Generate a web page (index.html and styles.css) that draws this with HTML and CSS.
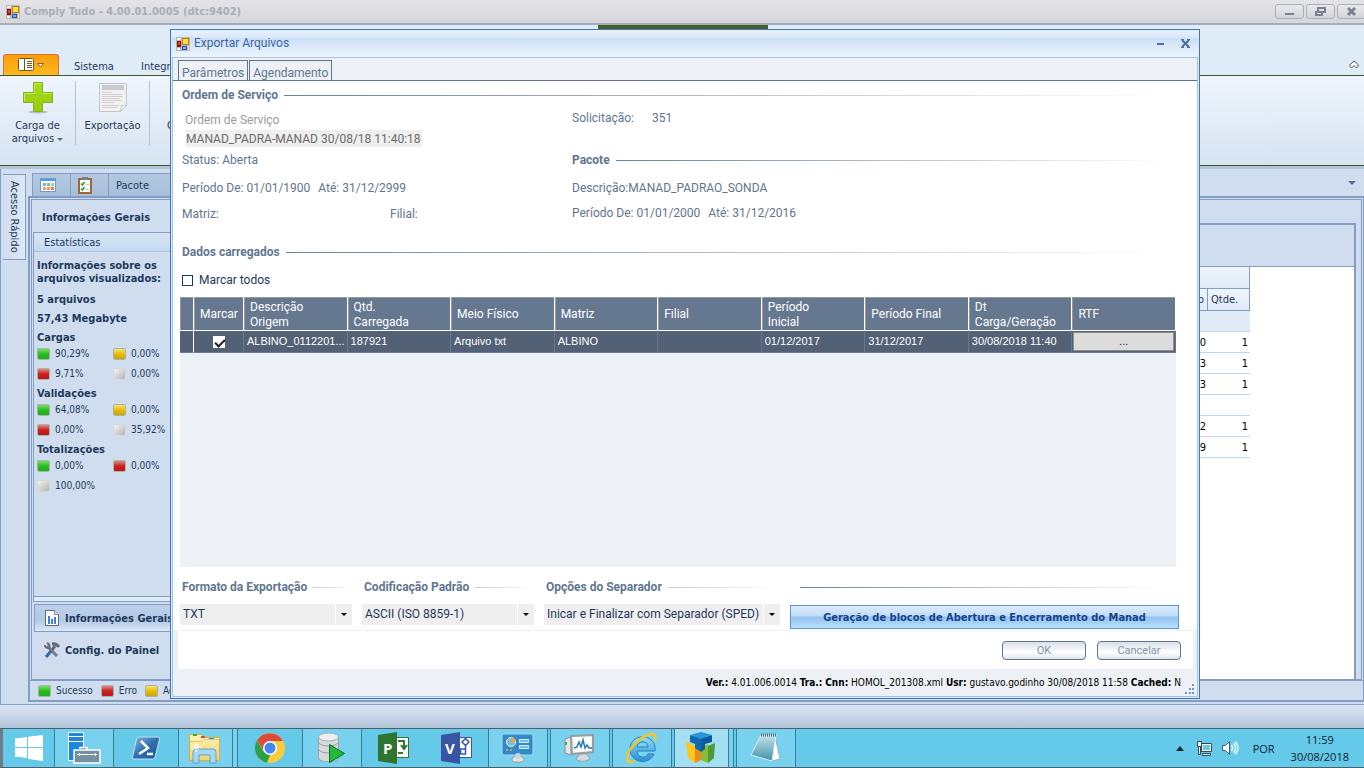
FILE: index.html
```html
<!DOCTYPE html>
<html lang="pt-BR">
<head>
<meta charset="UTF-8" />
<title>Comply Tudo - 4.00.01.0005 (dtc:9402)</title>
<meta name="viewport" content="width=device-width, initial-scale=1" />
<link rel="stylesheet" href="styles.css">
</head>
<body>

<svg width="0" height="0" class="defs">
  <defs>
    <linearGradient id="plusGrad" x1="0" y1="0" x2="0" y2="1"><stop offset="0" stop-color="#a6dc1c"/><stop offset="1" stop-color="#93cc0c"/></linearGradient>
    <linearGradient id="psGrad" x1="0" y1="0" x2="1" y2="1"><stop offset="0" stop-color="#8fb9dc"/><stop offset=".5" stop-color="#2f6fae"/><stop offset="1" stop-color="#1c4f90"/></linearGradient>
    <linearGradient id="folderGrad" x1="0" y1="0" x2="0" y2="1"><stop offset="0" stop-color="#fdf3b8"/><stop offset="1" stop-color="#f3d36c"/></linearGradient>
    <linearGradient id="noteGrad" x1="0" y1="0" x2="0" y2="1"><stop offset="0" stop-color="#c5e3ea"/><stop offset="1" stop-color="#3f93ab"/></linearGradient>
    <linearGradient id="ieGrad" x1="0" y1="0" x2="0" y2="1"><stop offset="0" stop-color="#8fdcf8"/><stop offset="1" stop-color="#2a8fd4"/></linearGradient>
    <symbol id="winforms" viewBox="0 0 14 14">
      <path fill="#b9b9b4" d="M0 0h14v14H0z"/><path fill="#f0f0ec" d="M1 1h4v2H1zM1 11h3v2H1zM12 9h1v4h-1z"/>
      <path fill="#8f1208" d="M1 4h4v6H1z"/><path fill="#e0402a" d="M2 5h2v3H2z"/>
      <path fill="#b48608" d="M6 1h7v7H6z"/><path fill="#ffd84a" d="M7 2h5v5H7z"/>
      <path fill="#2a55c0" d="M6 9h5v4H6z"/><path fill="#7aa6f4" d="M7 10h3v2H7z"/>
    </symbol>
  </defs>
</svg>

<div class="app">
  <header class="titlebar">
    <svg class="ico14" viewBox="0 0 14 14"><use href="#winforms"/></svg>
    <h1>Comply Tudo - 4.00.01.0005 (dtc:9402)</h1>
    <div class="win-buttons">
      <button aria-label="Minimizar"><svg width="27" height="13" viewBox="0 0 27 13"><path fill="#7d8090" d="M9 8h9v2H9z"/></svg></button>
      <button aria-label="Restaurar"><svg width="27" height="13" viewBox="0 0 27 13"><path fill="none" stroke="#7d8090" stroke-width="2" d="M11 6V3h7v4h-3M9 7h6v3H9z"/></svg></button>
      <button aria-label="Fechar"><svg width="27" height="13" viewBox="0 0 27 13"><path fill="none" stroke="#7d8090" stroke-width="3" d="M10 3l7 7M17 3l-7 7"/></svg></button>
    </div>
  </header>

  <nav class="ribbon-tabs">
    <button class="app-menu" aria-label="Menu">
      <svg width="26" height="14" viewBox="0 0 26 14"><rect x=".5" y=".5" width="15" height="12" rx="1" fill="#fff" stroke="#76551b"/><path stroke="#76551b" d="M6.500 1v11M9 3.500h5M9 5.500h5M9 7.500h5M9 9.500h5"/><path fill="#fff" stroke="#86611c" d="M19.500 5.500h6l-3 3.500z"/></svg>
    </button>
    <a href="#">Sistema</a>
    <a href="#">Integr</a>
    <svg class="collapse" width="10" height="9" viewBox="0 0 10 9"><path fill="#fff" stroke="#4b4f58" d="M5 1L1 4.500v2L2.500 8 5 5.500 7.500 8 9 6.500v-2z"/></svg>
  </nav>

  <div class="ribbon">
    <button class="tool">
      <svg width="34" height="34" viewBox="0 0 34 34"><ellipse cx="17" cy="31" rx="10" ry="1.500" fill="#b4bfc8"/><path fill="url(#plusGrad)" stroke="#84b022" d="M12.500 1.500h9v10h10v10h-10v9h-9v-9h-10v-10h10z"/><path fill="none" stroke="#c4ea5c" d="M13.500 12.500v-10h7M3.500 20v-7.500h10M21.500 12.500h9"/></svg>
      <span>Carga de<br>arquivos <i class="caret"></i></span>
    </button>
    <button class="tool wide">
      <svg width="34" height="34" viewBox="0 0 34 34"><path fill="#f1f1f1" stroke="#c2c4c6" d="M3.500 2.500h27v22l-6 6h-21z"/><path fill="#c9cacb" d="M6 4h22v5H6z"/><path stroke="#cfd0d1" d="M6 11.500h10M6 13.500h20M6 15.500h21M6 17.500h18M6 19.500h20M6 21.500h12M6 24.500h17M6 26.500h15"/><path fill="#fff" stroke="#c2c4c6" d="M24.500 30.500l1-6 5 0z"/></svg>
      <span>Exportação</span>
    </button>
    <button class="tool last"><span>C</span></button>
  </div>

  <main class="workspace">
    <aside class="rail"><button class="rail-tab">Acesso Rápido</button></aside>

    <div class="pane">
      <div class="doc-tabs">
        <button aria-label="Painel"><svg width="16" height="14" viewBox="0 0 16 14"><rect x=".5" y=".5" width="15" height="13" fill="#f6fafd" stroke="#6d9bd6"/><path fill="#5e9ae0" d="M1 1h14v2H1z"/><path fill="#79aee8" d="M3 5h3v3H3z"/><path fill="#7cc36c" d="M7 5h3v3H7z"/><path fill="#9bc5ee" d="M11 5h3v3h-3z"/><path fill="#f2a14a" d="M3 9h3v3H3zM7 9h3v3H7z"/><path fill="#f17f3e" d="M11 9h3v3h-3z"/></svg></button>
        <button aria-label="Tarefas"><svg width="14" height="17" viewBox="0 0 14 17"><rect x="1" y="2" width="12" height="14" fill="#fff" stroke="#a4633a" stroke-width="2"/><path fill="#77808a" d="M4 0h6v3H4z"/><path fill="none" stroke="#2fa033" stroke-width="1.500" d="M3 6.500l1.500 1.500 2-3M3 11.500L4.500 13l2-3"/><path stroke="#b7cbb5" d="M8 7.500h3M8 12.500h3"/></svg></button>
        <button>Pacote</button>
        <svg class="tab-list" width="8" height="4" viewBox="0 0 8 4"><path fill="#5c6b9c" d="M0 0h8L4 4z"/></svg>
      </div>

      <div class="frame">
        <div class="columns">
          <section class="side">
            <h2>Informações Gerais</h2>
            <div class="stats">
              <h3>Estatísticas</h3>
              <div class="stats-body">
                <p class="about">Informações sobre os<br>arquivos visualizados:</p>
                <p>5 arquivos</p>
                <p>57,43 Megabyte</p>
                <h4>Cargas</h4>
                <ul>
                  <li><i class="led green"></i>90,29%</li><li><i class="led yellow"></i>0,00%</li>
                  <li><i class="led red"></i>9,71%</li><li><i class="led gray"></i>0,00%</li>
                </ul>
                <h4>Validações</h4>
                <ul>
                  <li><i class="led green"></i>64,08%</li><li><i class="led yellow"></i>0,00%</li>
                  <li><i class="led red"></i>0,00%</li><li><i class="led gray"></i>35,92%</li>
                </ul>
                <h4>Totalizações</h4>
                <ul>
                  <li><i class="led green"></i>0,00%</li><li><i class="led red"></i>0,00%</li>
                  <li><i class="led gray"></i>100,00%</li>
                </ul>
              </div>
            </div>
            <button class="nav-item active">
              <svg width="16" height="16" viewBox="0 0 16 16"><path fill="#fff" stroke="#5f6874" d="M1.500.5h9l4 4v11h-13z"/><path fill="#dfe3e8" stroke="#8b939d" d="M10.500.5v4h4"/><path fill="#3f7fd0" d="M4 6h2v8H4zM7 9h2v5H7zM10 7h2v7h-2z"/></svg>
              Informações Gerais
            </button>
            <button class="nav-item">
              <svg width="16" height="16" viewBox="0 0 16 16"><path fill="none" stroke="#777e86" stroke-width="3" d="M3 4l10 10"/><path fill="none" stroke="#666c74" stroke-width="2" d="M1 3c0 3 2 3 4 3 1-2 0-4-2-5"/><path stroke="#666c74" stroke-width="3" d="M8 2c3-1 5 0 7 3M11 4L8 8"/><path stroke="#3c68ac" stroke-width="3" d="M7 9l-5 6"/></svg>
              Config. do Painel
            </button>
          </section>

          <section class="content">
            <div class="content-head"></div>
            <div class="grid-area">
              <table class="qtde">
                <colgroup><col><col class="c-qtde"></colgroup>
                <thead>
                  <tr><th colspan="2"></th></tr>
                  <tr><th>o</th><th class="q">Qtde.</th></tr>
                </thead>
                <tbody>
                  <tr class="group"><td></td><td></td></tr>
                  <tr><td>0</td><td>1</td></tr>
                  <tr><td>3</td><td>1</td></tr>
                  <tr><td>3</td><td>1</td></tr>
                  <tr><td></td><td></td></tr>
                  <tr><td>2</td><td>1</td></tr>
                  <tr><td>9</td><td>1</td></tr>
                </tbody>
              </table>
            </div>
          </section>
        </div>
        <footer class="legend">
          <span><i class="led green"></i>Sucesso</span>
          <span><i class="led red"></i>Erro</span>
          <span><i class="led yellow"></i>Ac</span>
        </footer>
      </div>
    </div>
  </main>
  <div class="app-status"></div>

  <div class="top-mark"></div>

  <div class="dialog" role="dialog" aria-label="Exportar Arquivos">
    <div class="dialog-title">
      <svg class="ico14" viewBox="0 0 14 14"><use href="#winforms"/></svg>
      <h2>Exportar Arquivos</h2>
      <button aria-label="Minimizar"><svg width="9" height="9" viewBox="0 0 9 9"><path fill="#4a6fa5" d="M1 4h7v2H1z"/></svg></button>
      <button aria-label="Fechar"><svg width="9" height="9" viewBox="0 0 9 9"><path fill="none" stroke="#4d6d9c" stroke-width="2" d="M1 1l7 7M8 1L1 8"/><path stroke="#4d6d9c" d="M0 .5h3M6 .5h3M0 8.500h3M6 8.500h3"/></svg></button>
    </div>
    <div class="dialog-inner">
      <div class="dialog-tabs">
        <button>Parâmetros</button>
        <button>Agendamento</button>
      </div>

      <div class="dialog-body">
        <h3 class="rule">Ordem de Serviço</h3>
        <div class="details">
          <div class="order">
            <label for="ordem">Ordem de Serviço</label>
            <input id="ordem" type="text" value="MANAD_PADRA-MANAD 30/08/18 11:40:18" readonly>
            <p class="status">Status: Aberta</p>
            <p class="tall"><span>Período De: 01/01/1900</span><span>Até: 31/12/2999</span></p>
            <p class="split"><span>Matriz:</span><span>Filial:</span></p>
          </div>
          <div class="package">
            <p class="request"><span>Solicitação:</span><span>351</span></p>
            <h3 class="rule">Pacote</h3>
            <p class="tall">Descrição:MANAD_PADRAO_SONDA</p>
            <p class="close"><span>Período De: 01/01/2000</span><span>Até: 31/12/2016</span></p>
          </div>
        </div>

        <h3 class="rule loaded">Dados carregados</h3>
        <label class="check-all"><input type="checkbox"> Marcar todos</label>

        <div class="data-area">
          <table class="data">
            <colgroup><col class="c-row"><col class="c-mark"><col><col><col><col><col><col><col><col><col></colgroup>
            <thead>
              <tr>
                <th></th><th>Marcar</th><th>Descrição<br>Origem</th><th>Qtd.<br>Carregada</th><th>Meio Físico</th><th>Matriz</th><th>Filial</th><th>Período<br>Inicial</th><th>Período Final</th><th>Dt<br>Carga/Geração</th><th>RTF</th>
              </tr>
            </thead>
            <tbody>
              <tr>
                <td></td><td class="mark"><input type="checkbox" aria-label="Marcar" checked></td><td>ALBINO_0112201...</td><td>187921</td><td>Arquivo txt</td><td>ALBINO</td><td></td><td>01/12/2017</td><td>31/12/2017</td><td>30/08/2018 11:40</td><td class="rtf"><button>...</button></td>
              </tr>
            </tbody>
          </table>
        </div>

        <div class="options">
          <div class="option">
            <label class="rule" for="formato">Formato da Exportação</label>
            <div class="combo"><select id="formato"><option>TXT</option></select></div>
          </div>
          <div class="option">
            <label class="rule" for="codificacao">Codificação Padrão</label>
            <div class="combo"><select id="codificacao"><option>ASCII (ISO 8859-1)</option></select></div>
          </div>
          <div class="option sep">
            <label class="rule" for="separador">Opções do Separador</label>
            <div class="combo"><select id="separador"><option>Inicar e Finalizar com Separador (SPED)</option></select></div>
          </div>
          <div class="option manad">
            <div class="rule"></div>
            <button class="big-button">Geração de blocos de Abertura e Encerramento do Manad</button>
          </div>
        </div>
      </div>

      <div class="actions">
        <button>OK</button>
        <button>Cancelar</button>
      </div>
      <div class="dialog-status">
        <p><b>Ver.:</b> 4.01.006.0014 <b>Tra.:</b> <b>Cnn:</b> HOMOL_201308.xml <b>Usr:</b> gustavo.godinho 30/08/2018 11:58 <b>Cached:</b> N</p>
        <svg width="10" height="10" viewBox="0 0 10 10"><path fill="#6a96d4" d="M7 0h2v2H7zM4 4h2v2H4zM7 4h2v2H7zM0 8h2v2H0zM4 8h2v2H4zM7 8h2v2H7z"/></svg>
      </div>
    </div>
  </div>
</div>

<div class="taskbar">
  <button class="task start" aria-label="Iniciar"><svg width="28" height="28" viewBox="0 0 28 28"><path fill="#fff" d="M0 4.500L12 3v10H0zM13 2.800L28 1v12H13zM0 14h12v10L0 22.500zM13 14h15v13l-15-2z"/></svg></button>
  <button class="task open" aria-label="Gerenciador do Servidor"><svg width="34" height="34" viewBox="0 0 34 34"><path fill="#1d87dd" stroke="#fff" d="M1.500 1.500h15v28h-15z"/><path stroke="#fff" d="M1 5.500h16M1 10.500h16"/><path fill="#75909f" stroke="#fff" stroke-width="1.500" d="M13 18V16.500h7V19M7 19h26v13H7z"/><path stroke="#fff" d="M10 23.500h20M12.500 22v3M28.500 22v3"/></svg></button>
  <button class="task" aria-label="PowerShell"><svg width="30" height="26" viewBox="0 0 30 26"><path fill="url(#psGrad)" stroke="#bfe0f2" d="M7 2h20q2 0 1.500 2L24 22q-.5 2-2.500 2H3q-2 0-1.500-2L5.500 4Q6 2 7 2z"/><path fill="none" stroke="#fff" stroke-width="2.500" d="M10 6l7 7-9 6M16 19h6"/></svg></button>
  <button class="task open stacked" aria-label="Explorador de Arquivos"><svg width="34" height="32" viewBox="0 0 34 32"><path fill="url(#folderGrad)" stroke="#d9ac3e" d="M1.500 4.500v-2h12l2 3h16v23h-30z"/><path fill="#26b53a" d="M5 2h4v2H5z"/><path fill="#e0482c" d="M13 4h4v2h-4z"/><path fill="#3b8ee0" d="M21 6h5v2h-5z"/><path fill="none" stroke="#e7c765" d="M2 9.500h12l2-2h15"/><path fill="#a5d8f0" stroke="#5aa5cc" d="M5 31V20q0-3 3-3h17q3 0 3 3v11h-6v-8H11v8z"/><path stroke="#fff" d="M8 10v10M3 15h10M5 12l6 6M11 12l-6 6"/></svg></button>
  <button class="task" aria-label="Chrome"><svg width="30" height="30" viewBox="0 0 30 30"><circle cx="15" cy="15" r="15" fill="#f9cc3c"/><path fill="#dd4b3e" d="M2 7.500A15 15 0 0 1 28 8H15L9 18z"/><path fill="#2da04c" d="M2 7.500L9 19l6 3-3 7.800A15 15 0 0 1 2 7.500z"/><circle cx="15" cy="15" r="7" fill="#fff"/><circle cx="15" cy="15" r="5.500" fill="#4285f4"/></svg></button>
  <button class="task open" aria-label="SQL Server"><svg width="30" height="32" viewBox="0 0 30 32"><path fill="#d6dadd" stroke="#9aa1a7" d="M1.500 5v21c0 5 20 5 20 0V5z"/><ellipse cx="11.500" cy="5" rx="10" ry="4" fill="#eceeef" stroke="#a6acb1"/><path fill="none" stroke="#949ba1" d="M2 11c3 4 16 4 19 0M2 18c3 4 16 4 19 0"/><path fill="#23b93a" stroke="#0b6e1e" d="M12.500 12.500l15 9-15 9z"/></svg></button>
  <button class="task office" aria-label="Project"><svg width="32" height="32" viewBox="0 0 32 32"><path fill="#fff" stroke="#31752f" d="M16.500 5.500h14v20h-14z"/><path fill="none" stroke="#31752f" stroke-width="2" d="M20 9h6v7M23 13l3 4 3-4M20 21h5"/><path fill="#2f7430" d="M0 3l19-3v32L0 29z"/><text x="5" y="22" class="letter">P</text></svg></button>
  <button class="task office" aria-label="Visio"><svg width="32" height="32" viewBox="0 0 32 32"><path fill="#fff" stroke="#3955a3" d="M16.500 5.500h14v20h-14z"/><path fill="none" stroke="#3955a3" stroke-width="1.500" d="M21 10l3.500-3.500L28 10l-3.500 3.500zM24.500 13v4h-5v5h5v-5"/><path fill="#3955a3" d="M0 3l19-3v32L0 29z"/><text x="4" y="22" class="letter">V</text></svg></button>
  <button class="task open gap" aria-label="Painel de Controle"><svg width="34" height="30" viewBox="0 0 34 30"><rect x="1" y="1" width="31" height="21" rx="2" fill="#328bc8" stroke="#a4d8f0"/><circle cx="10" cy="9" r="4.500" fill="#7dbce2" stroke="#e5f4fb"/><path fill="#f6a42c" d="M10 9V4.500a4.500 4.500 0 0 1 4.500 4.500z"/><path fill="#69c4f2" stroke="#d6effa" d="M18.500 6.500h9v3h-9zM18.500 12.500h9v3h-9z"/><circle cx="6" cy="17" r="1" fill="#f6a42c"/><circle cx="10" cy="17" r="1" fill="#f6a42c"/><path fill="#dfe3e6" stroke="#959ca2" d="M11 27c0-3 3-4 6-4s6 1 6 4-12 3-12 0z"/><circle cx="17" cy="23" r="3" fill="#cdd3d8"/></svg></button>
  <button class="task open gap" aria-label="Monitor"><svg width="32" height="30" viewBox="0 0 32 30"><path fill="#e3e5e7" stroke="#8b9197" d="M1 6l6-2v18l-6-2z"/><path fill="#2fc12f" d="M1 9h2v3H1z"/><path fill="#f3f3f3" stroke="#989da2" stroke-width="2" d="M7 3l22-1v17L8 21z"/><path fill="#fff" d="M10 5l17-1v13l-16 2z"/><path fill="none" stroke="#2777b9" stroke-width="1.500" d="M10 15l3-1 2-5 2 5 2-7 2 8 2-3 2 3h3"/><path fill="#d7dadc" stroke="#9a9fa3" d="M16 21h7l3 5c-4 3-12 3-14 0z"/></svg></button>
  <button class="task open gap" aria-label="Internet Explorer"><svg width="32" height="32" viewBox="0 0 32 32"><path fill="url(#ieGrad)" stroke="#2583c4" d="M29 19H11c0 7 9 8 11 3h6c-5 12-24 9-24-5C4 0 31 1 29 19zM11 15h11c0-7-10-7-11 0z"/><path fill="none" stroke="#f3c527" stroke-width="2.500" d="M29 9c2-6-1-9-7-6C12 6 1 19 1 26c0 5 4 5 8 3"/></svg></button>
  <button class="task open current stacked gap" aria-label="Comply Tudo"><svg width="30" height="32" viewBox="0 0 30 32"><path fill="#fbc81c" d="M0 9l9 5v17L2 26z"/><path fill="#f08a1c" d="M9 14l6 4v10l-6 3z"/><path fill="#86bd34" d="M15 15l7-3v19l-7-3z"/><path fill="#4d9b35" d="M22 14l7-3-1 15-6 5z"/><path fill="#1469ac" d="M4 3l11 3v14l-6-4v-4l-5-2z"/><path fill="#0f5a9c" d="M15 6l11-3v7l-7 2v5l-4 3z"/><path fill="#2695dc" d="M4 3l11-3 11 3-11 4z"/></svg></button>
  <button class="task open" aria-label="Bloco de Notas"><svg width="32" height="30" viewBox="0 0 32 30"><path fill="#fff" stroke="#9fb2ba" d="M25 3l5 23-8 2z"/><path fill="url(#noteGrad)" stroke="#d9eef3" d="M11 2h15l-4 26L1 22z"/><path stroke="#53656c" stroke-dasharray="1 1" stroke-width="3" d="M11 2h15"/></svg></button>

  <div class="tray">
    <svg width="8" height="5" viewBox="0 0 8 5"><path fill="#10222b" d="M0 5h8L4 0z"/></svg>
    <svg width="17" height="16" viewBox="0 0 17 16"><path fill="#fff" stroke="#2c4957" d="M5.500 3.500h10v8h-10z"/><path fill="#65c9ea" d="M7 5h7v5H7z"/><path fill="#fff" stroke="#2c4957" d="M6.500 13.500h8v2h-8zM1.500 1.500h4v5h-4zM2.500 6.500h2v8h-2z"/></svg>
    <svg width="18" height="16" viewBox="0 0 18 16"><path fill="#fff" stroke="#3b5866" d="M1.500 5.500h3l4-4v13l-4-4h-3z"/><path fill="none" stroke="#e9f8fd" stroke-width="1.500" d="M10.500 5q2 3 0 6M12.500 3q4 5 0 10M14.500 1.500q5 6.500 0 13"/></svg>
    <span class="lang">POR</span>
    <time>11:59<br>30/08/2018</time>
  </div>
</div>

</body>
</html>
```
FILE: styles.css
```css
* {
  box-sizing: border-box;
}
body {
  margin: 0;
  height: 100vh;
  display: flex;
  flex-direction: column;
  overflow: hidden;
  font-family: "DejaVu Sans Condensed", "DejaVu Sans", sans-serif;
  font-size: 11px;
  line-height: 13px;
  color: #1e395b;
}
h1, h2, h3, h4, p, ul {
  margin: 0;
  padding: 0;
  font-size: 11px;
}
button, input, select {
  font: inherit;
  color: inherit;
  margin: 0;
  padding: 0;
  border: none;
  background: none;
}
svg {
  display: block;
  flex: none;
}
.defs {
  position: absolute;
}
.ico14 {
  width: 14px;
  height: 14px;
}

/* janela principal */
.app {
  flex: 1;
  min-height: 0;
  display: flex;
  flex-direction: column;
  position: relative;
  background: #cfddee;
}
.titlebar {
  display: flex;
  align-items: center;
  gap: 4px;
  height: 25px;
  padding-left: 6px;
  overflow: hidden;
  background: linear-gradient(#e3e3e8, #d6d7dc);
  border-bottom: 2px solid #a5abb8;
}
.titlebar h1 {
  flex: 1;
  color: #aaadb9;
}
.win-buttons {
  display: flex;
  gap: 2px;
  margin-right: -2px;
}
.win-buttons button {
  border: 1px solid #adb0b9;
  border-radius: 3px;
  background: linear-gradient(#e9e9ec, #d3d4d9);
}
.ribbon-tabs {
  display: flex;
  align-items: flex-end;
  height: 51px;
  padding-left: 3px;
  background: #dfebf7;
  border-bottom: 1px solid #3b5a28;
}
.ribbon-tabs a {
  color: #1e395b;
  text-decoration: none;
  margin-left: 15px;
  padding-bottom: 2px;
  width: 52px;
}
.app-menu {
  display: flex;
  align-items: center;
  justify-content: center;
  width: 56px;
  height: 21px;
  border: 1px solid #d9742b;
  border-bottom: none;
  border-radius: 3px 3px 0 0;
  background: linear-gradient(#fb9d0c, #ffb822);
}
.collapse {
  margin: 0 5px 6px auto;
}
.ribbon {
  display: flex;
  height: 90px;
  background: linear-gradient(#eff5fd, #d6e3f1);
  border-bottom: 1px solid #3b5a28;
}
.tool {
  display: flex;
  flex-direction: column;
  align-items: center;
  gap: 4px;
  width: 76px;
  height: 64px;
  margin-top: 5px;
  border-right: 1px solid #b4c3d8;
  text-align: center;
}
.tool.wide {
  width: 74px;
}
.tool.last {
  border: none;
  padding: 38px 0 0 17px;
  align-items: flex-start;
}
.caret {
  display: inline-block;
  border: 3px solid transparent;
  border-top-color: #5b6b80;
  border-bottom: none;
  vertical-align: middle;
}

.workspace {
  flex: 1;
  min-height: 0;
  display: flex;
  border-top: 3px solid #b3c4d6;
}
.rail {
  width: 28px;
  padding: 5px 2px;
  border-left: 1px solid #859dc2;
}
.rail-tab {
  writing-mode: vertical-rl;
  width: 23px;
  height: 86px;
  border: 1px solid #859dc2;
  border-left: none;
  background: linear-gradient(90deg, #cfddee, #dbe8f6);
}
.pane {
  flex: 1;
  min-width: 0;
  display: flex;
  flex-direction: column;
  padding-top: 4px;
}
.doc-tabs {
  display: flex;
  align-items: stretch;
  height: 23px;
  padding-left: 4px;
}
.doc-tabs button {
  display: flex;
  align-items: center;
  width: 38px;
  padding-left: 7px;
  border: 1px solid #859dc2;
  border-right: none;
  border-bottom: none;
  background: linear-gradient(#b3c8e1, #a7bfdb);
}
.doc-tabs button:last-of-type {
  width: 120px;
}
.tab-list {
  margin: 8px 8px 0 auto;
}
.frame {
  flex: 1;
  min-height: 0;
  display: flex;
  flex-direction: column;
  border: 2px solid #859dc2;
  border-right-width: 1px;
  margin-bottom: 2px;
}
.columns {
  flex: 1;
  min-height: 0;
  display: flex;
  margin: 1px 1px 0;
  border: 1px solid #859dc2;
}
.side {
  width: 200px;
  padding: 0 1px;
  display: flex;
  flex-direction: column;
}
.side h2 {
  padding: 11px 9px 8px;
}
.stats {
  flex: 1;
  min-height: 0;
  border: 1px solid #859dc2;
  margin-bottom: 2px;
  box-shadow: inset 0 -4px #dfeaf6, inset 0 -5px #859dc2;
}
.stats h3 {
  padding: 3px 10px 2px;
  font-weight: normal;
  background: linear-gradient(#d7e5f5, #c3daf2);
  border-bottom: 1px solid #a9c4e4;
}
.stats-body {
  padding: 7px 3px;
}
.stats-body p {
  font-weight: bold;
  margin-bottom: 6px;
}
.stats-body .about {
  margin-bottom: 8px;
}
.stats-body h4 {
  margin-bottom: 3px;
}
.stats-body ul {
  display: grid;
  grid-template-columns: 76px 76px;
  row-gap: 7px;
  list-style: none;
  margin-bottom: 7px;
  font-size: 10px;
}
.stats-body li {
  display: flex;
  align-items: center;
  gap: 5px;
}
.led {
  flex: none;
  width: 13px;
  height: 12px;
  border: 1px solid #a8b3a8;
  border-radius: 2px;
}
.led.green {
  background: linear-gradient(#7ddf6c, #27bb20 50%, #22ae1c);
}
.led.red {
  background: linear-gradient(#e08a86, #c91f1f 50%, #b81a1a);
}
.led.yellow {
  background: linear-gradient(#fbe56e, #e8bb0a 50%, #cfa500);
}
.led.gray {
  background: linear-gradient(135deg, #f2f2f2, #b5b5b5);
  border-color: #d8d8d8;
}
.nav-item {
  display: flex;
  align-items: center;
  gap: 5px;
  height: 28px;
  margin: 0 1px 4px;
  padding-left: 9px;
  border: 1px solid transparent;
  font-weight: bold;
  white-space: nowrap;
}
.nav-item:last-child {
  margin-bottom: 15px;
}
.nav-item.active {
  border: 1px solid #859dc2;
  background: linear-gradient(#bdd0e9, #b2c9e5 60%, #dbe8f7);
}
.content {
  flex: 1;
  min-width: 0;
  display: flex;
  flex-direction: column;
  margin: 23px 5px 0 0;
  border: 2px solid #859dc2;
  border-bottom: none;
}
.content-head {
  height: 42px;
  border-bottom: 1px solid #859dc2;
}
.grid-area {
  flex: 1;
  padding-right: 104px;
  background: #fff;
}
.qtde {
  width: 100%;
  border-collapse: separate;
  border-spacing: 0;
  table-layout: fixed;
  color: #000;
}
.c-qtde {
  width: 42px;
}
.qtde tr {
  height: 21px;
}
.qtde th {
  height: 22px;
  padding: 0 3px;
  font-weight: normal;
  text-align: right;
  color: #1e395b;
  background: linear-gradient(#edf4fc, #e0ebf8);
  border: solid #859dc2;
  border-width: 0 1px 1px 0;
}
.qtde .q {
  text-align: left;
}
.qtde td {
  padding: 0 2px;
  text-align: right;
  border-bottom: 1px solid #bfd5f0;
}
.qtde .group td {
  background: #e1ebf6;
}
.legend {
  display: flex;
  align-items: center;
  height: 20px;
  padding-left: 8px;
  gap: 8px;
  border-top: 1px solid #859dc2;
  font-size: 10px;
}
.legend span {
  display: flex;
  align-items: center;
  gap: 5px;
}
.app-status {
  height: 24px;
  border-top: 1px solid #859dc2;
  background: linear-gradient(#dbe6f5, #b4c5db);
}
.top-mark {
  position: absolute;
  left: 598px;
  top: 25px;
  width: 170px;
  height: 4px;
  background: #42602c;
}

/* janela de exportação */
.dialog {
  position: absolute;
  left: 170px;
  right: 164px;
  top: 29px;
  bottom: 29px;
  display: flex;
  flex-direction: column;
  padding: 0 1px 1px;
  border: 1px solid #3f78b5;
  background: #dceafa;
  font-family: Roboto, sans-serif;
  font-size: 12px;
  color: #5f7690;
}
.dialog-title {
  display: flex;
  align-items: center;
  gap: 4px;
  height: 27px;
  padding: 0 8px 0 4px;
  background: linear-gradient(#e8f1fb, #d7e7f8 30%, #cbdff6 31%, #edf5fd);
}
.dialog-title h2 {
  flex: 1;
  font-size: 12px;
  font-weight: normal;
  color: #3a65a5;
}
.dialog-title button + button {
  margin-left: 12px;
}
.dialog-inner {
  flex: 1;
  min-height: 0;
  display: flex;
  flex-direction: column;
  border: 1px solid #a3c3e8;
  background: #edf1f5;
}
.dialog-tabs {
  display: flex;
  align-items: flex-end;
  gap: 1px;
  height: 23px;
  padding-left: 5px;
  border-bottom: 1px solid #5f7690;
}
.dialog-tabs button {
  height: 20px;
  padding: 4px 3px 0;
  border: 1px solid #5f7690;
  border-bottom: none;
  line-height: 16px;
}
.dialog-body {
  flex: 1;
  min-height: 0;
  display: flex;
  flex-direction: column;
  padding: 0 18px 1px 7px;
  background: #fff;
}
.rule {
  display: flex;
  align-items: center;
  gap: 6px;
  height: 28px;
  padding: 0 10px 0 2px;
  font-size: 12px;
  font-weight: bold;
  white-space: nowrap;
}
.rule::after {
  content: "";
  flex: 1;
  height: 1px;
  background: linear-gradient(90deg, #6d8298, #fff);
}
.details {
  display: flex;
  padding-left: 2px;
}
.details p {
  display: flex;
  align-items: center;
  height: 24px;
  font-size: 12px;
  gap: 8px;
}
.details .tall {
  height: 28px;
}
.details .close {
  height: 22px;
}
.order {
  width: 390px;
}
.order label {
  display: block;
  padding: 3px 3px 0;
  height: 21px;
  line-height: 16px;
  color: #9b9b9b;
}
.order input {
  display: block;
  width: 236px;
  height: 17px;
  margin-left: 4px;
  background: #efefef;
  color: #6b6b6b;
}
.details .status {
  height: 27px;
}
.details .split {
  gap: 0;
}
.split span {
  flex: none;
  width: 208px;
}
.package {
  flex: 1;
}
.package .request {
  height: 19px;
  gap: 18px;
  margin-bottom: 18px;
}
.package .rule {
  padding-left: 0;
}
.loaded {
  margin-top: 12px;
}
.check-all {
  display: flex;
  align-items: center;
  gap: 6px;
  height: 28px;
  padding-left: 2px;
  color: #1e395b;
}
.check-all input {
  appearance: none;
  width: 11px;
  height: 11px;
  border: 1px solid #1e395b;
  background: #fff;
}
.data-area {
  flex: 1;
  min-height: 0;
  margin: 3px 3px 6px 0;
  background: #edf1f5;
}
.data {
  width: 100%;
  table-layout: fixed;
  border-collapse: separate;
  border-spacing: 0;
  color: #fff;
}
.c-row {
  width: 14px;
}
.c-mark {
  width: 50px;
}
.data th {
  height: 34px;
  padding: 2px 0 0 6px;
  line-height: 15px;
  text-align: left;
  font-weight: normal;
  background: #667890;
  border: solid #fff;
  border-width: 0 1px 1px 0;
  box-shadow: inset 1px 1px #9a9a94;
  white-space: nowrap;
}
.data td {
  height: 22px;
  padding: 0 0 0 3px;
  font-family: "Liberation Sans", Arial, sans-serif;
  font-size: 11px;
  background: #526175;
  border-right: 1px solid #667890;
  border-bottom: 1px solid #667890;
  white-space: nowrap;
}
.data td:first-child {
  border-right-color: #fff;
}
.data td.mark {
  padding: 0;
}
.mark input {
  appearance: none;
  display: block;
  width: 12px;
  height: 12px;
  margin: 0 auto;
  overflow: hidden;
  background: #fff;
}
.mark input:checked::after {
  content: "";
  display: block;
  width: 8px;
  height: 4px;
  margin-left: 2px;
  border: solid #222;
  border-width: 0 0 2px 2px;
  transform: translateY(3px) rotate(-45deg);
}
.data td.rtf {
  padding: 0 1px;
}
.rtf button {
  display: block;
  width: 100%;
  height: 19px;
  border: 1px solid #8f8f8a;
  background: #dcdcdc;
  color: #222;
}
.options {
  display: flex;
  gap: 10px;
}
.option {
  width: 172px;
}
.option.sep {
  width: 236px;
}
.option.manad {
  flex: 1;
}
.option .rule {
  padding-right: 0;
}
.option label.rule::after {
  background: linear-gradient(90deg, #c3cdd8, #fff);
}
.manad .rule {
  padding: 0 12px 0 10px;
}
.combo {
  position: relative;
  margin-top: 3px;
}
.combo select {
  appearance: none;
  display: block;
  width: 100%;
  height: 21px;
  padding-left: 3px;
  background: linear-gradient(#fff, #fff) right 16px top / 1px 100% no-repeat #efefef;
  color: #1e395b;
}
.combo::after {
  content: "";
  position: absolute;
  right: 5px;
  top: 9px;
  border: 3px solid transparent;
  border-top-color: #000;
  border-bottom: none;
  pointer-events: none;
}
.big-button {
  display: block;
  width: 100%;
  height: 24px;
  margin-top: 4px;
  border: 1px solid #5b95dc;
  background: linear-gradient(#dcebfa, #c0dcf7 45%, #92c3f0 50%, #b9defa);
  font-family: "DejaVu Sans Condensed", "DejaVu Sans", sans-serif;
  font-size: 11px;
  font-weight: bold;
  color: #15428b;
}
.actions {
  display: flex;
  align-items: center;
  justify-content: flex-end;
  gap: 11px;
  height: 38px;
  margin: 1px 4px 0 5px;
  padding-right: 12px;
  background: #fff;
}
.actions button {
  width: 84px;
  height: 19px;
  border: 1px solid #5f7690;
  border-radius: 4px;
  background: linear-gradient(#d8dfe6, #fff 60%, #dfe4ea);
  font-size: 11px;
  color: #7d90a6;
}
.dialog-status {
  display: flex;
  align-items: center;
  justify-content: flex-end;
  gap: 4px;
  height: 27px;
  padding-right: 2px;
  font-family: "DejaVu Sans Condensed", "DejaVu Sans", sans-serif;
  color: #000;
}
.dialog-status p {
  font-size: 10px;
  white-space: nowrap;
}
.dialog-status svg {
  align-self: flex-end;
  margin-bottom: 2px;
}

/* barra de tarefas */
.taskbar {
  display: flex;
  height: 40px;
  background: #65c9ea;
  border: solid #4f5f66;
  border-width: 1px 0;
}
.task {
  display: flex;
  align-items: center;
  justify-content: center;
  width: 64px;
}
.task.start {
  width: 54px;
  border-left: 3px solid #6f7f86;
}
.task.open {
  width: 60px;
  background: #78d1ee;
  border: solid #377f98;
  border-width: 0 1px;
}
.task.office {
  width: 63px;
}
.task.gap {
  margin-right: 2px;
}
.task.current {
  background: #a3def3;
}
.task.stacked {
  padding-right: 6px;
  box-shadow: inset -4px 0 #78d1ee, inset -5px 0 #377f98;
}
.letter {
  font: bold 15px "Open Sans", sans-serif;
  fill: #fff;
}
.tray {
  display: flex;
  align-items: center;
  margin-left: auto;
  padding-right: 15px;
  gap: 12px;
  font-family: "Open Sans", sans-serif;
  font-size: 11px;
  line-height: 17px;
  color: #10222b;
}
.tray svg + svg {
  margin-right: -4px;
}
.lang {
  margin: 0 4px 0 6px;
}
.tray time {
  text-align: center;
}
```
